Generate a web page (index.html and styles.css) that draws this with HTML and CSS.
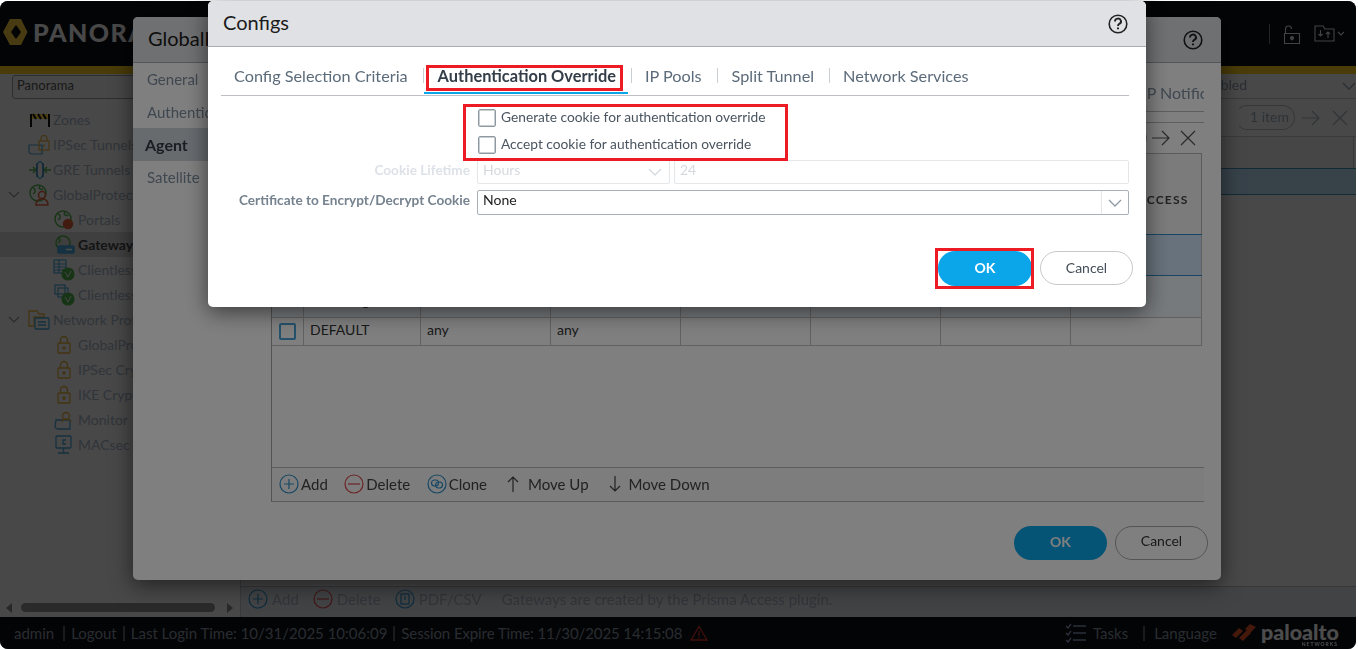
FILE: index.html
```html
<!DOCTYPE html>
<html lang="en">
<head>
<meta charset="utf-8">
<title>Configs</title>
<link rel="stylesheet" href="styles.css">
</head>
<body>
<div class="screen">
  <div class="app">
    <header class="topbar">
      <svg class="logo-mark" viewBox="0 0 26 28" width="26" height="28"><path fill-rule="evenodd" d="M8 1h11l6.500 13L19 27H8L1 14zM13.500 7.500 9 14l4.500 6.500h1L19 14l-4.500-6.500z" fill="#f2c13a"/></svg>
      <span class="brand">PANORAMA</span>
      <div class="top-icons">
        <span class="top-sep"></span>
        <svg width="18" height="20" viewBox="0 0 18 20" fill="none" stroke="#d8dfe5" stroke-width="1.100"><path d="M1.500 9.500h15v10h-15zM2.500 9.500V5a3 3 0 0 1 6 0"/><circle cx="9" cy="14" r="1.500" fill="#d8dfe5"/><path d="M9 14v2.500"/></svg>
        <svg width="30" height="20" viewBox="0 0 30 20" fill="none" stroke="#d8dfe5" stroke-width="1.100"><path d="M1 2h8l2 3h9v12H1z"/><path d="M6.500 6v6M4.500 10l2 2 2-2M14 14V8M12 10l2-2 2 2"/><path d="M24 8l3 3 3-3"/></svg>
      </div>
    </header>
    <div class="stripe"></div>
    <div class="workspace">
      <aside class="sidebar">
        <div class="side-select">Panorama</div>
        <ul class="tree">
          <li class="node lvl1"><svg width="24" height="18" viewBox="0 0 24 18"><path d="M3 3h19v5H1z" fill="#ffd447"/><path d="M5 3l3 5M10 3l3 5M15 3l3 5" stroke="#111" stroke-width="2"/><path d="M3 3v13M21 3v13" stroke="#111" stroke-width="2"/></svg><span>Zones</span></li>
          <li class="node lvl1"><svg width="24" height="20" viewBox="0 0 24 20" fill="none" stroke="#4aa3d8" stroke-width="1.200"><path d="M1 10h13v9H4a3 3 0 0 1-3-3z"/><rect x="11" y="6" width="10" height="9" stroke="#e0ac3a"/><path d="M13 6V3.500a3 3 0 0 1 6 0V6" stroke="#e0ac3a"/><circle cx="16" cy="10.500" r="1" fill="#e0ac3a" stroke="none"/></svg><span>IPSec Tunnels</span></li>
          <li class="node lvl1"><svg width="24" height="20" viewBox="0 0 24 20" fill="none" stroke="#4aa3d8" stroke-width="1.400"><path d="M1 10h7M5 7l3 3-3 3" stroke="#52b04a"/><path d="M16 10h7M19 7l-3 3 3 3" stroke="#52b04a"/><ellipse cx="12" cy="10" rx="3.500" ry="8.500"/><path d="M9 3v14M15 3v14" stroke="#3a7ca5"/></svg><span>GRE Tunnels</span></li>
          <li class="node lvl0"><svg class="chev" width="12" height="8" viewBox="0 0 12 8" fill="none" stroke="#8a9299" stroke-width="1.200"><path d="M1 1l5 5 5-5"/></svg><svg width="24" height="22" viewBox="0 0 24 22" fill="none" stroke-width="1.500"><circle cx="10" cy="9" r="8" stroke="#52b04a"/><path d="M5 4c3 1 3 4 0 6M12 2c-2 3 1 4 3 3" stroke="#52b04a"/><circle cx="14" cy="11" r="3.500" stroke="#e0603a"/><path d="M8 21c0-5 3-6 6-6s6 1 6 6z" stroke="#e0603a"/></svg><span>GlobalProtect</span></li>
          <li class="node lvl2"><svg width="22" height="20" viewBox="0 0 22 20" fill="none" stroke-width="1.500"><circle cx="10" cy="9" r="8" stroke="#52b04a"/><path d="M5 4c3 1 3 4 0 6M12 2c-2 3 1 4 3 3" stroke="#52b04a"/><circle cx="15" cy="14" r="4.500" fill="#e0603a" stroke="#e0603a"/></svg><span>Portals</span></li>
          <li class="node lvl2 selected"><svg width="22" height="20" viewBox="0 0 22 20" fill="none" stroke-width="1.500"><circle cx="10" cy="8" r="7" stroke="#52b04a"/><path d="M5 3c3 1 3 3 0 5" stroke="#52b04a"/><rect x="5" y="11" width="16" height="7" rx="1" fill="#4aa3d8" stroke="#4aa3d8"/><path d="M13 14.500h6" stroke="#fff"/></svg><span>Gateways</span></li>
          <li class="node lvl2"><svg width="22" height="22" viewBox="0 0 22 22" fill="none" stroke-width="1.200"><rect x="1" y="1" width="12" height="13" stroke="#4aa3d8"/><path d="M1 5h12M1 8h12M1 11h12M6 1v13" stroke="#4aa3d8"/><circle cx="15" cy="15" r="6" fill="#52b04a" stroke="#52b04a"/><path d="M12 13l3 5 3-6" stroke="#fff" stroke-width=".8"/></svg><span>Clientless Apps</span></li>
          <li class="node lvl2"><svg width="22" height="22" viewBox="0 0 22 22" fill="none" stroke-width="1.200"><rect x="2" y="1" width="10" height="9" stroke="#4aa3d8"/><rect x="5" y="4" width="10" height="9" stroke="#4aa3d8"/><circle cx="15" cy="15" r="6" fill="#52b04a" stroke="#52b04a"/><path d="M12 13l3 5 3-6" stroke="#fff" stroke-width=".8"/></svg><span>Clientless App Groups</span></li>
          <li class="node lvl0"><svg class="chev" width="12" height="8" viewBox="0 0 12 8" fill="none" stroke="#8a9299" stroke-width="1.200"><path d="M1 1l5 5 5-5"/></svg><svg width="24" height="20" viewBox="0 0 24 20" fill="none" stroke-width="1.300"><path d="M1 1h8l2 3h5v3H6v9H1z" stroke="#e0ac3a"/><rect x="7" y="8" width="14" height="11" rx="1" stroke="#4aa3d8"/><path d="M10 12h8M10 15h8" stroke="#4aa3d8"/></svg><span>Network Profiles</span></li>
          <li class="node lvl2"><svg width="22" height="20" viewBox="0 0 22 20" fill="none" stroke="#e0ac3a" stroke-width="1.300"><rect x="5" y="8" width="12" height="10" rx="1"/><path d="M7.500 8V5a3.500 3.500 0 0 1 7 0v3"/><circle cx="11" cy="13" r="1" fill="#e0ac3a"/></svg><span>GlobalProtect IPSec Crypto</span></li>
          <li class="node lvl2"><svg width="22" height="20" viewBox="0 0 22 20" fill="none" stroke="#e0ac3a" stroke-width="1.300"><rect x="5" y="8" width="12" height="10" rx="1"/><path d="M7.500 8V5a3.500 3.500 0 0 1 7 0v3"/><circle cx="11" cy="13" r="1" fill="#e0ac3a"/></svg><span>IPSec Crypto</span></li>
          <li class="node lvl2"><svg width="22" height="20" viewBox="0 0 22 20" fill="none" stroke="#e0ac3a" stroke-width="1.300"><rect x="5" y="8" width="12" height="10" rx="1"/><path d="M7.500 8V5a3.500 3.500 0 0 1 7 0v3"/><circle cx="11" cy="13" r="1" fill="#e0ac3a"/></svg><span>IKE Crypto</span></li>
          <li class="node lvl2"><svg width="22" height="20" viewBox="0 0 22 20" fill="none" stroke-width="1.300"><path d="M3 10h14v9H5a3 3 0 0 1-3-3z" stroke="#4aa3d8"/><circle cx="13" cy="6" r="3.500" stroke="#e0ac3a"/><path d="M9 12c0-2 2-3 4-3s5 1 5 3" stroke="#e0ac3a"/></svg><span>Monitor</span></li>
          <li class="node lvl2"><svg width="22" height="20" viewBox="0 0 22 20" fill="none" stroke="#4aa3d8" stroke-width="1.300"><rect x="3" y="1" width="15" height="12" rx="1"/><path d="M10.500 13v4M5 18h11M13 5h-3v4h3"/></svg><span>MACsec</span></li>
        </ul>
        <div class="side-scroll">
          <span class="tri tri-left"></span>
          <span class="thumb"></span>
          <span class="tri tri-right"></span>
        </div>
      </aside>
      <main class="main">
        <div class="filter-row"><span class="filter-value">Enabled</span><svg width="14" height="8" viewBox="0 0 14 8" fill="none" stroke="#8e99a3" stroke-width="1.300"><path d="M1 1l6 6 6-6"/></svg></div>
        <div class="search-row">
          <span class="pill">1 item</span>
          <svg width="20" height="18" viewBox="0 0 20 18" fill="none" stroke="#a4aeb8" stroke-width="1.200"><path d="M1 9h17M11 2l7 7-7 7"/></svg>
          <svg width="16" height="16" viewBox="0 0 16 16" fill="none" stroke="#a4aeb8" stroke-width="1.200"><path d="M1 1l14 14M15 1 1 15"/></svg>
        </div>
        <div class="grid-head"></div>
        <div class="grid-row"></div>
        <div class="grid-fill"></div>
        <div class="toolbar app-toolbar">
          <span class="tool"><svg width="20" height="20" viewBox="0 0 20 20" fill="none" stroke="#2f8fc9" stroke-width="1.200"><circle cx="10" cy="10" r="9"/><path d="M10 5v10M5 10h10"/></svg>Add</span>
          <span class="tool"><svg width="20" height="20" viewBox="0 0 20 20" fill="none" stroke="#d9484d" stroke-width="1.200"><circle cx="10" cy="10" r="9"/><path d="M4 10h12"/></svg>Delete</span>
          <span class="tool"><svg width="20" height="20" viewBox="0 0 20 20" fill="none" stroke="#2f8fc9" stroke-width="1.200"><circle cx="10" cy="10" r="9"/><rect x="6" y="5" width="8" height="10"/><path d="M10 7v4"/></svg>PDF/CSV</span>
          <span class="tool-note">Gateways are created by the Prisma Access plugin.</span>
        </div>
      </main>
    </div>
    <footer class="statusbar">
      <span class="stat first">admin</span>
      <span class="stat">Logout</span>
      <span class="stat">Last Login Time: 10/31/2025 10:06:09</span>
      <span class="stat stat-session">Session Expire Time: 11/30/2025 14:15:08</span>
      <svg class="warn" width="18" height="16" viewBox="0 0 18 16" fill="none" stroke="#d9342b" stroke-width="1.300"><path d="M9 1.500 17 15H1z"/><path d="M9 6v5M9 12v1.500"/></svg>
      <div class="status-right">
        <svg width="22" height="20" viewBox="0 0 22 20" fill="none" stroke="#8ea3c4" stroke-width="1.300"><path d="M8 3h13M8 10h13M8 17h13M1 3l2 2 3-4M1 10l2 2 3-4M1 17l2 2 3-4"/></svg>
        <span class="stat-task">Tasks</span>
        <span class="stat stat-lang">Language</span>
        <svg class="pa-mark" width="26" height="18" viewBox="0 0 26 18" fill="#e8502a"><path d="M1 11 8 4l4 3-7 7zM8 14l8-8 4 3-8 8zM14 5l5-5 6 3-6 6z"/></svg>
        <span class="pa-text">paloalto<small>NETWORKS</small></span>
      </div>
    </footer>
    <div class="scrim"></div>
  </div>

  <section class="window gateway-window">
    <div class="win-head"><h2 class="win-title">GlobalProtect Gateway Configuration</h2>
      <svg class="help" width="20" height="20" viewBox="0 0 20 20" fill="none" stroke="#222" stroke-width="1.600"><circle cx="10" cy="10" r="8.800"/><path d="M7 7.500a3 2.800 0 1 1 4.300 2.400c-.9.500-1.300 1-1.300 2.100" stroke-width="1.900"/><path d="M10 13.500v1.800" stroke-width="2"/></svg>
    </div>
    <div class="win-body">
      <nav class="side-nav">
        <a class="nav-item">General</a>
        <a class="nav-item">Authentication</a>
        <a class="nav-item active">Agent</a>
        <a class="nav-item">Satellite</a>
      </nav>
      <div class="win-content">
        <div class="sub-tabs"><span class="sub-tab">HIP Notification</span></div>
        <div class="sub-line"></div>
        <div class="table-tools">
          <span class="tools-pill">1 item</span>
          <svg width="20" height="18" viewBox="0 0 20 18" fill="none" stroke="#555" stroke-width="1.200"><path d="M1 9h17M11 2l7 7-7 7"/></svg>
          <svg width="16" height="16" viewBox="0 0 16 16" fill="none" stroke="#555" stroke-width="1.200"><path d="M1 1l14 14M15 1 1 15"/></svg>
        </div>
        <div class="data-table">
          <div class="cols head">
            <span class="c"></span><span class="c"></span><span class="c"></span><span class="c"></span><span class="c"></span><span class="c"></span><span class="c"></span>
            <span class="c head-last">PRISMA ACCESS</span>
          </div>
          <div class="cols row-sel">
            <span class="c"></span><span class="c"></span><span class="c"></span><span class="c"></span><span class="c"></span><span class="c"></span><span class="c"></span><span class="c"></span>
          </div>
          <div class="cols row-alt">
            <span class="c"></span><span class="c tall">Tunneling</span><span class="c"></span><span class="c"></span><span class="c"></span><span class="c"></span><span class="c"></span><span class="c"></span>
          </div>
          <div class="cols row-plain">
            <span class="c"><i class="tick"></i></span><span class="c">DEFAULT</span><span class="c">any</span><span class="c">any</span><span class="c"></span><span class="c"></span><span class="c"></span><span class="c"></span>
          </div>
          <div class="table-space"></div>
          <div class="toolbar table-toolbar">
            <span class="tool"><svg width="20" height="20" viewBox="0 0 20 20" fill="none" stroke="#2f8fc9" stroke-width="1.200"><circle cx="10" cy="10" r="9"/><path d="M10 5v10M5 10h10"/></svg>Add</span>
            <span class="tool"><svg width="20" height="20" viewBox="0 0 20 20" fill="none" stroke="#d9484d" stroke-width="1.200"><circle cx="10" cy="10" r="9"/><path d="M4 10h12"/></svg>Delete</span>
            <span class="tool"><svg width="20" height="20" viewBox="0 0 20 20" fill="none" stroke="#2f8fc9" stroke-width="1.200"><circle cx="10" cy="10" r="9"/><rect x="4.500" y="6" width="7" height="6" rx="3"/><rect x="8.500" y="8" width="7" height="6" rx="3"/></svg>Clone</span>
            <span class="tool move"><svg width="14" height="18" viewBox="0 0 14 18" fill="none" stroke="#444" stroke-width="1.200"><path d="M7 17V2M2 7l5-5 5 5"/></svg>Move Up</span>
            <span class="tool move move-down"><svg width="14" height="18" viewBox="0 0 14 18" fill="none" stroke="#444" stroke-width="1.200"><path d="M7 1v15M2 11l5 5 5-5"/></svg>Move Down</span>
          </div>
        </div>
      </div>
    </div>
    <div class="win-foot">
      <button class="btn btn-ok">OK</button>
      <button class="btn btn-cancel">Cancel</button>
    </div>
  </section>

  <div class="scrim scrim-top"></div>

  <section class="window configs-window">
    <div class="win-head configs-head"><h2 class="win-title configs-title">Configs</h2>
      <svg class="help" width="20" height="20" viewBox="0 0 20 20" fill="none" stroke="#222" stroke-width="1.600"><circle cx="10" cy="10" r="8.800"/><path d="M7 7.500a3 2.800 0 1 1 4.300 2.400c-.9.500-1.300 1-1.300 2.100" stroke-width="1.900"/><path d="M10 13.500v1.800" stroke-width="2"/></svg>
    </div>
    <div class="configs-body">
      <div class="tabs">
        <span class="tab">Config Selection Criteria</span>
        <span class="tab tab-active">Authentication Override</span>
        <span class="tab">IP Pools</span>
        <span class="tab tab-split">Split Tunnel</span>
        <span class="tab tab-last">Network Services</span>
      </div>
      <div class="form">
        <span></span>
        <label class="check-line"><i class="box"></i><span class="check-text">Generate cookie for authentication override</span></label>
        <span></span>
        <label class="check-line"><i class="box"></i><span class="check-text">Accept cookie for authentication override</span></label>
        <span class="field-label disabled">Cookie Lifetime</span>
        <div class="pair">
          <div class="ctl ctl-off ctl-unit">Hours<svg width="14" height="8" viewBox="0 0 14 8" fill="none" stroke="#d5dadf" stroke-width="1.300"><path d="M1 1l6 6 6-6"/></svg></div>
          <div class="ctl ctl-off ctl-num">24</div>
        </div>
        <span class="field-label cert-label">Certificate to Encrypt/Decrypt Cookie</span>
        <div class="ctl ctl-main"><span class="ctl-text">None</span><span class="ctl-arrow"><svg width="14" height="8" viewBox="0 0 14 8" fill="none" stroke="#8e99a3" stroke-width="1.300"><path d="M1 1l6 6 6-6"/></svg></span></div>
      </div>
    </div>
    <div class="configs-foot">
      <button class="btn btn-primary">OK</button>
      <button class="btn btn-plain">Cancel</button>
    </div>
    <span class="mark mark-tab"></span>
    <span class="mark mark-checks"></span>
    <span class="mark mark-ok"></span>
  </section>
</div>
</body>
</html>
```

FILE: styles.css
```css
* { box-sizing: border-box; }
html, body { margin: 0; padding: 0; background: #fff; }
body { font-family: Lato, "Liberation Sans", sans-serif; overflow: hidden; }
.screen { position: relative; width: 1358px; height: 649px; overflow: hidden; background: #fff; }
.app { position: relative; margin-top: 1px; width: 1356px; height: 648px; border-radius: 8px; overflow: hidden; display: flex; flex-direction: column; background: #f0f0f0; filter: blur(.35px); }
.scrim { position: absolute; inset: 0; background: rgba(0, 0, 0, .4); }
.scrim-top { inset: 1px 2px 0 0; border-radius: 8px; background: rgba(0, 0, 0, .5); }

.topbar { height: 65px; background: #0b0f16; display: flex; align-items: center; padding: 0 0 0 2px; flex: none; }
.logo-mark { margin-top: -3px; }
.brand { margin-left: 5px; margin-top: -3px; color: #f0f0f0; font-weight: 900; font-size: 25px; letter-spacing: 1.500px; }
.top-icons { margin-left: auto; display: flex; align-items: center; gap: 13px; margin-right: 12px; }
.top-sep { width: 1px; height: 20px; background: #6f7a85; }
.stripe { height: 8px; background: #f6c81e; flex: none; }

.workspace { flex: 1; display: flex; min-height: 0; }
.sidebar { width: 241px; flex: none; display: flex; flex-direction: column; border-right: 1px solid #c4c4c4; background: #f0f0f0; }
.side-select { margin: 1px 0 0 12px; height: 24px; line-height: 19px; padding-left: 4px; font-size: 13px; color: #555; background: #ededed; border: 1px solid #9a9a9a; border-radius: 3px; width: 250px; flex: none; }
.tree { list-style: none; margin: 8px 0 0; padding: 0; flex: 1; overflow: hidden; }
.node { height: 25px; display: flex; align-items: center; font-size: 14px; color: #a3b1bf; white-space: nowrap; }
.node svg { flex: none; margin-right: 1px; }
.lvl1 { padding-left: 28px; }
.lvl2 { padding-left: 53px; }
.lvl2 svg { margin-right: 3px; }
.lvl0 { padding-left: 8px; }
.lvl0 .chev { margin-right: 8px; }
.selected { background: #d2d2d2; color: #454545; font-weight: 700; }
.side-scroll { height: 13px; flex: none; margin-bottom: 3px; display: flex; align-items: center; padding-left: 6px; }
.tri { width: 0; height: 0; border-top: 5px solid transparent; border-bottom: 5px solid transparent; }
.tri-left { border-right: 6px solid #888; margin-right: 9px; }
.tri-right { border-left: 6px solid #888; margin-left: 12px; }
.thumb { width: 194px; height: 9px; border-radius: 5px; background: #8c8c8c; }

.main { flex: 1; display: flex; flex-direction: column; min-width: 0; }
.filter-row { height: 25px; display: flex; align-items: center; justify-content: flex-end; font-size: 14px; color: #8a98a5; border-bottom: 1px solid #c4c4c4; flex: none; margin-left: 900px; }
.filter-value { margin-right: auto; margin-left: 57px; padding-bottom: 4px; }
.search-row { height: 38px; display: flex; align-items: center; justify-content: flex-end; gap: 6px; padding-right: 8px; flex: none; border-bottom: 1px solid #c4c4c4; }
.pill { width: 60px; height: 25px; line-height: 22px; padding-left: 14px; font-size: 14px; color: #9aa8b5; border: 1px solid #b5b5b5; border-left-color: transparent; border-radius: 13px; }
.search-row svg:last-child { margin-left: 5px; }
.grid-head { height: 31px; background: #eaeaea; border-right: 1px solid #bbb; margin-right: 2px; flex: none; }
.grid-row { height: 27px; background: #b8dcf5; border-top: 1px solid #3f8fb3; border-bottom: 1px solid #3f8fb3; flex: none; }
.grid-fill { flex: 1; background: #f0f0f0; }
.toolbar { display: flex; align-items: center; font-size: 15px; }
.app-toolbar { height: 31px; padding: 0 0 7px 7px; background: #d9dfe6; border-top: 1px solid #b9b9b9; flex: none; color: #a3b1bf; }
.tool { display: inline-flex; align-items: center; gap: 4px; margin-right: 14px; white-space: nowrap; }
.tool-note { margin-left: 6px; color: #a3b1bf; font-size: 15px; }

.statusbar { position: relative; height: 32px; flex: none; background: #0b0f16; display: flex; align-items: center; color: #8893a0; font-size: 15px; padding-left: 14px; white-space: nowrap; }
.stat { padding: 0 6px; border-left: 2px solid #56606a; line-height: 15px; }
.stat.first { border-left: 0; padding: 0 9px 0 0; }
.stat-session { letter-spacing: -.1px; }
.warn { margin-left: 2px; }
.status-right { margin-left: auto; display: flex; align-items: center; padding-right: 17px; }
.stat-task { margin: 0 15px 0 6px; }
.stat-lang { padding: 0 14px 0 9px; }
.pa-text { position: relative; font-weight: 900; font-size: 21.500px; color: #fff; margin-left: 4px; line-height: 20px; margin-top: -3px; }
.pa-text small { position: absolute; right: 1px; top: 19px; font-size: 5px; letter-spacing: 1px; font-weight: 700; line-height: 6px; }

.window { position: absolute; display: flex; flex-direction: column; background: #fff; border-radius: 5px; overflow: hidden; box-shadow: 0 5px 22px rgba(0, 0, 0, .55); }
.gateway-window { left: 133px; top: 17px; width: 1088px; height: 563px; filter: blur(.35px); }
.configs-window { left: 208px; top: 1px; width: 938px; height: 306px; }
.win-head { height: 46px; flex: none; display: flex; align-items: center; justify-content: space-between; padding: 0 18px 0 15px; background: #dfe1e4; border-bottom: 1px solid #a9acaf; }
.win-title { margin: 0 0 4px; font-weight: 400; font-size: 20px; color: #1b1b1b; white-space: nowrap; }
.help { flex: none; }

.win-body { flex: 1; display: flex; min-height: 0; }
.side-nav { width: 125px; flex: none; display: flex; flex-direction: column; background: #fefefe; }
.nav-item { height: 32.500px; line-height: 32px; padding-left: 14px; font-size: 15px; color: #7f8fa0; white-space: nowrap; overflow: hidden; }
.nav-item.active { background: #cfd6dd; color: #333e49; font-weight: 700; padding-left: 12px; font-size: 16px; line-height: 33px; }
.win-content { flex: 1; min-width: 0; padding: 0 17px 0 13px; display: flex; flex-direction: column; }
.sub-tabs { height: 49px; display: flex; align-items: center; justify-content: flex-end; border-bottom: 1px solid #bcbcbc; flex: none; padding-top: 10px; }
.sub-tab { font-size: 16px; color: #7f8fa0; white-space: nowrap; width: 74px; overflow: hidden; }
.sub-line { height: 11px; border-bottom: 1px solid #bcbcbc; flex: none; }
.table-tools { height: 30px; flex: none; display: flex; align-items: center; justify-content: flex-end; gap: 4px; padding-right: 8px; }
.tools-pill { width: 50px; height: 22px; line-height: 20px; font-size: 13px; padding-left: 6px; color: #555; border: 1px solid #bcbcbc; border-radius: 11px; }
.table-tools svg:last-child { margin-left: 5px; }
.data-table { flex: 1; display: flex; flex-direction: column; border-left: 1px solid #a6a6a6; margin-bottom: 3px; min-height: 0; }
.cols { display: grid; grid-template-columns: 32px 117px 130px 130px 130px 130px 130px 1fr; flex: none; font-size: 14px; color: #333; margin-right: 2px; }
.c { display: flex; align-items: center; padding: 0 0 5px 6px; border-right: 1px solid #c2c2c2; white-space: nowrap; }
.head { height: 81px; background: #f6f6f6; border-top: 1px solid #b9b9b9; border-right: 1px solid #b9b9b9; }
.head-last { font-size: 12px; font-weight: 700; letter-spacing: 1.200px; color: #444; padding: 10px 0 0 11px; border-right: 0; overflow: hidden; }
.row-sel { height: 42px; background: #d0e4f8; border-top: 1px solid #2f8fc9; border-bottom: 1px solid #2f8fc9; }
.row-alt { height: 42px; background: #eef4fa; border-bottom: 1px solid #c2c2c2; }
.c.tall { padding: 11px 0 3px 6px; }
.row-plain { height: 28px; background: #fff; border-bottom: 1px solid #c2c2c2; }
.tick { display: block; width: 17px; height: 17px; border: 2px solid #4aa3d8; border-radius: 2px; margin: 5px 0 0 1px; }
.table-space { flex: 1; }
.table-toolbar { height: 35px; flex: none; padding: 0 0 2px 7px; background: #fafafa; border-top: 1px solid #b9b9b9; border-bottom: 1px solid #b9b9b9; color: #444; }
.table-toolbar .tool { gap: 2px; margin-right: 16.500px; }
.table-toolbar .move { gap: 8px; margin-left: 2.500px; }
.table-toolbar .move-down { gap: 7px; }
.win-foot { height: 75px; flex: none; display: flex; justify-content: flex-end; gap: 8px; padding: 21px 13px 0 0; }

.btn { width: 93px; height: 34px; padding: 0; border-radius: 17px; font-family: inherit; font-size: 14px; background: #fff; color: #444; border: 1px solid #c4c4c4; }
.btn-ok { background: #0ba6ea; color: #fff; border: 0; font-weight: 700; padding-bottom: 4px; }
.btn-cancel { color: #333; border-color: #a9a9a9; padding-bottom: 6px; }
.btn-primary { background: #0ba6ea; color: #fff; border: 0; font-weight: 700; width: 94px; height: 35px; padding-bottom: 2px; }
.btn-plain { color: #444e58; border-color: #c9c9c9; padding-bottom: 2px; }

.configs-body { flex: 1; padding: 0 17px 0 13px; min-height: 0; }
.tabs { height: 49px; display: flex; align-items: center; border-bottom: 1px solid #bdc1c5; }
.tab { position: relative; padding: 0 15px 0 13px; height: 15px; line-height: 15px; border-right: 1px solid #c9ced3; font-size: 16.250px; color: #5c6b7a; white-space: nowrap; margin-top: 9px; }
.tab-last { border-right: 0; }
.tab-active { font-weight: 700; font-size: 16.400px; color: #333e49; padding-left: 14px; }
.tab-split { padding-left: 14px; }
.tab-active::after { content: ""; position: absolute; left: 0; right: 3px; top: 24px; height: 2px; background: #0ba6ea; }
.form { display: grid; grid-template-columns: 249px 1fr; column-gap: 7px; margin-top: 8px; }
.check-line { height: 27px; display: flex; align-items: center; gap: 5px; font-size: 13.750px; color: #4a5560; margin-left: 1px; }
.check-text { padding-bottom: 3px; }
.box { width: 18px; height: 18px; border: 1px solid #8e98a1; border-radius: 2px; background: #fff; box-shadow: inset 0 0 0 1px #c9ced3; }
.field-label { display: flex; align-items: center; justify-content: flex-end; font-size: 13.600px; font-weight: 700; color: #76838f; white-space: nowrap; }
.field-label.disabled { color: #dde2e8; height: 24px; margin-top: 2px; padding-bottom: 5px; }
.field-label.cert-label { height: 25px; padding-bottom: 6px; }
.pair { display: flex; gap: 4px; height: 32px; padding: 2px 0 6px; }
.ctl { display: flex; align-items: center; font-size: 14px; }
.ctl-off { border: 1px solid #e4e7ea; border-radius: 2px; color: #d5dadf; padding: 0 0 5px 5px; }
.ctl-unit { width: 193px; justify-content: space-between; padding-right: 7px; }
.ctl-unit svg { margin-top: 5px; }
.ctl-num { flex: 1; }
.ctl-main { height: 25px; border: 1px solid #a9b0b8; border-radius: 2px; color: #222; justify-content: space-between; }
.ctl-text { padding: 0 0 6px 5px; }
.ctl-arrow { width: 27px; height: 100%; display: flex; align-items: center; justify-content: center; border-left: 1px solid #e4e7ea; }
.configs-foot { height: 56px; flex: none; display: flex; justify-content: flex-end; align-items: flex-start; gap: 8px; padding-right: 13px; margin-top: -15px; }

.mark { position: absolute; border: 3px solid #ed1c24; pointer-events: none; }
.mark-tab { left: 218px; top: 64px; width: 197px; height: 26px; }
.mark-checks { left: 255px; top: 103px; width: 325px; height: 57px; }
.mark-ok { left: 727px; top: 247px; width: 99px; height: 41px; }
```
